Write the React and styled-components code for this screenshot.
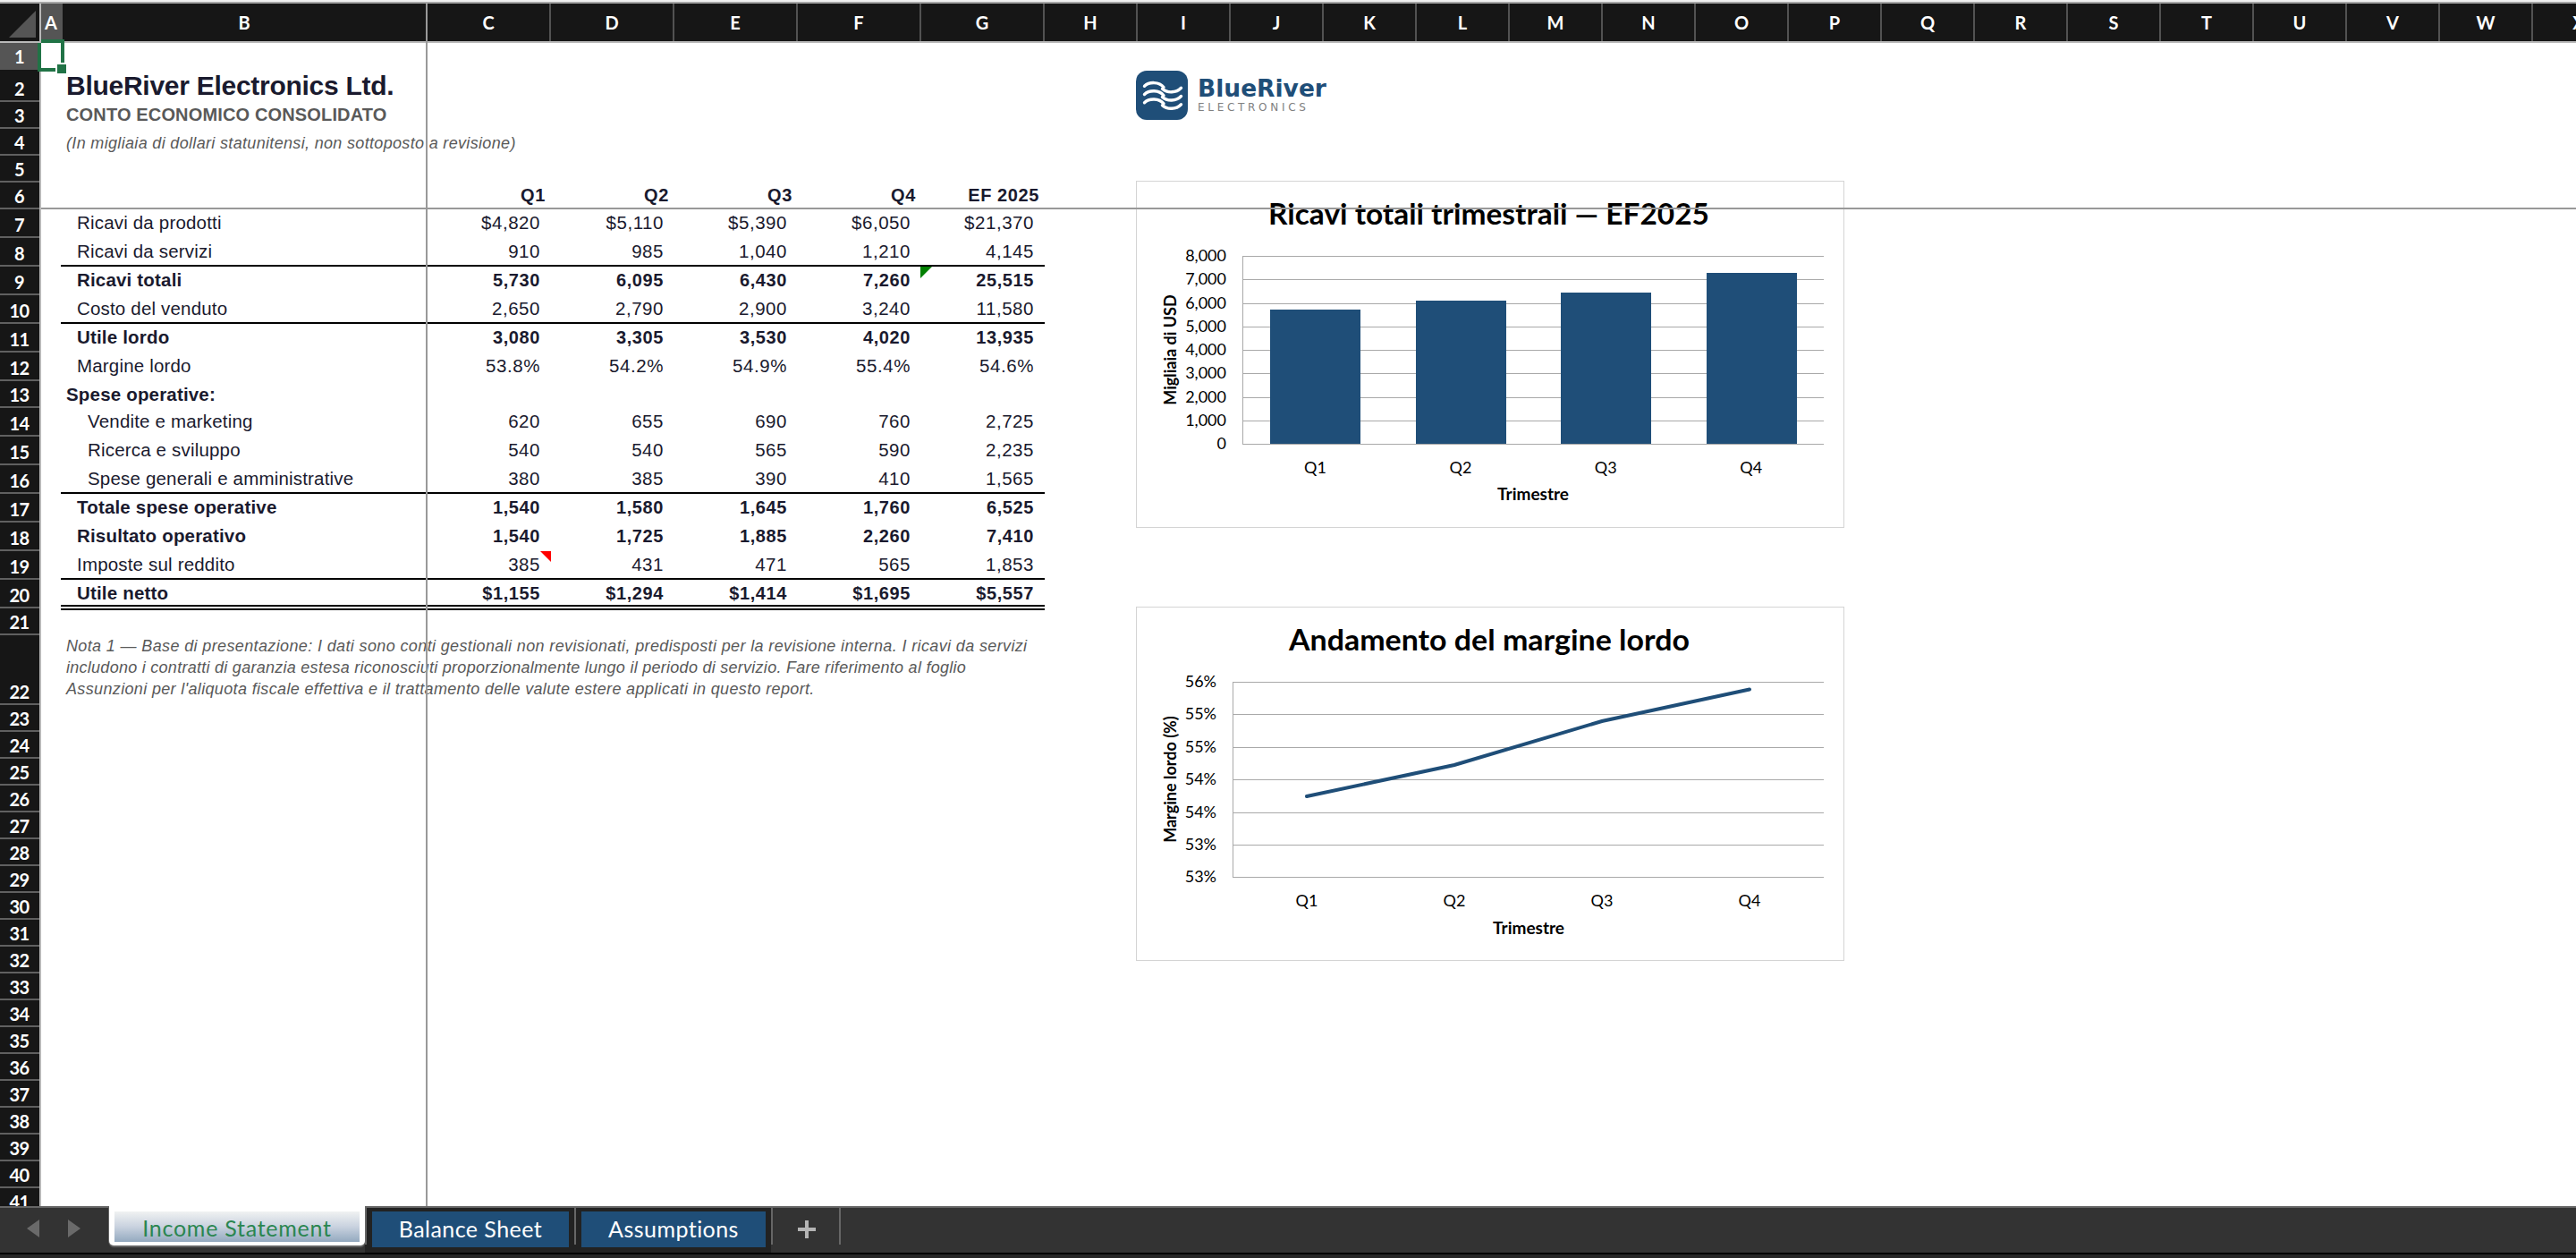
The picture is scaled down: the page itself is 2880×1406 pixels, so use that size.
import React from 'react';
import styled, { createGlobalStyle } from 'styled-components';

const GlobalStyle = createGlobalStyle`
  * { box-sizing: border-box; }
  body { margin: 0; background: #fff; overflow: hidden; }
`;

const SHEET_FONT = '"Liberation Sans", Arial, sans-serif';
const UI_FONT = 'Lato, sans-serif';
const NAVY = '#1f4e78';

const Window = styled.div`
  display: flex;
  flex-direction: column;
  width: 2880px;
  height: 1406px;
  overflow: hidden;
  background: #fff;
`;

const TopEdge = styled.div`
  height: 4px;
  flex: none;
  background: #f0f0f0;
  border-bottom: 2px solid #a6a6a6;
`;

const HeaderRow = styled.div`
  display: flex;
  flex: none;
  height: 44px;
  background: #161616;
  border-bottom: 2px solid #b9b9b9;
`;

const Corner = styled.div`
  display: flex;
  flex: none;
  width: 46px;
  padding: 8px 0 0 10px;
  border-right: 2px solid #b9b9b9;
`;

const ColumnHead = styled.div`
  flex: none;
  width: ${p => p.$width}px;
  border-right: 2px solid ${p => (p.$active ? '#555' : '#525252')};
  background: ${p => (p.$active ? '#555' : 'transparent')};
  color: #fff;
  font: 700 20px/42px ${UI_FONT};
  text-align: center;
`;

const Body = styled.div`
  display: flex;
  flex: none;
  height: 1300px;
  position: relative;
`;

const RowHeads = styled.div`
  flex: none;
  width: 46px;
  height: 1300px;
  overflow: hidden;
  background: #161616;
  border-right: 2px solid #b9b9b9;
`;

const RowHead = styled.div`
  display: flex;
  align-items: flex-end;
  justify-content: center;
  height: ${p => p.$height}px;
  padding-right: 1px;
  border-bottom: 2px solid ${p => (p.$active ? '#555' : '#606060')};
  background: ${p => (p.$active ? '#555' : 'transparent')};
  color: #fff;
  font: 700 20px/26px ${UI_FONT};
  letter-spacing: -0.5px;
`;

const Sheet = styled.div`
  flex: none;
  width: 1122px;
  padding-left: 22px;
  font-family: ${SHEET_FONT};
  color: #1a1a2e;
`;

const Row = styled.div`
  display: flex;
  align-items: flex-end;
  height: ${p => p.$height}px;
  border-bottom: ${p => (p.$line ? '2px solid #000' : '2px solid transparent')};
  font-size: 20.5px;
  font-weight: ${p => (p.$bold ? 700 : 400)};
  line-height: ${p => (p.$height > 30 ? 30 : 27)}px;
`;

const Label = styled.div`
  flex: none;
  width: 410px;
  padding-left: ${p => 6 + p.$indent * 12}px;
  letter-spacing: 0.18px;
  white-space: nowrap;
`;

const Value = styled.div`
  position: relative;
  flex: none;
  width: 138px;
  padding-right: ${p => (p.$head ? 6 : 12)}px;
  font-size: ${p => (p.$bold ? 20 : 20.5)}px;
  letter-spacing: ${p => (p.$bold ? 0.6 : 0.55)}px;
  text-align: right;
`;

const Flag = styled.svg`
  position: absolute;
  top: 0;
  ${p => (p.$side === 'left' ? 'left: -1px;' : 'right: 0;')}
`;

const Company = styled(Label)`
  font-size: 30px;
  font-weight: 700;
  letter-spacing: -0.27px;
  line-height: 32px;
`;

const Statement = styled(Label)`
  color: #595959;
  font-size: 20px;
  font-weight: 700;
  letter-spacing: 0.15px;
  line-height: 28px;
`;

const Remark = styled(Label)`
  color: #595959;
  font-size: 18px;
  font-style: italic;
  letter-spacing: 0.33px;
  line-height: 24px;
`;

const DoubleRule = styled.div`
  height: 6px;
  margin-top: -4px;
  border: solid #000;
  border-width: 2px 0;
`;

const Note = styled.div`
  margin-top: 28px;
  padding-left: 6px;
  color: #595959;
  font-size: 18px;
  font-style: italic;
  line-height: 24px;
  white-space: nowrap;
`;

const NoteLine = styled.div`
  letter-spacing: ${p => p.$tracking}px;
`;

const Objects = styled.div`
  flex: none;
  width: 794px;
  margin-left: 102px;
  padding-top: 31px;
`;

const Brand = styled.div`
  display: flex;
  height: 123px;
`;

const BrandText = styled.div`
  padding: 5px 0 0 11px;
  font-family: "DejaVu Sans", sans-serif;
`;

const BrandName = styled.div`
  color: ${NAVY};
  font-size: 26.5px;
  font-weight: 700;
  line-height: 29px;
`;

const BrandSub = styled.div`
  color: #808080;
  font-size: 12px;
  letter-spacing: 3.7px;
  line-height: 15px;
`;

const ChartBox = styled.div`
  width: 792px;
  height: ${p => p.$height}px;
  margin-bottom: 88px;
  background: #fff;
  border: 1px solid #d4d4d4;
`;

const FreezeLine = styled.div`
  position: absolute;
  background: #999;
  ${p => (p.$vertical
    ? 'left: 476px; top: -44px; width: 2px; height: 1344px;'
    : 'left: 46px; right: 0; top: 184px; height: 2px;')}
`;

const Cursor = styled.svg`
  position: absolute;
  left: 42px;
  top: -4px;
`;

const TabBar = styled.div`
  display: flex;
  flex: none;
  height: 54px;
  background: #333;
  border-bottom: 2px solid #000;
`;

const TabNav = styled.div`
  display: flex;
  align-items: center;
  gap: 32px;
  width: 122px;
  padding: 0 0 4px 30px;
  border-top: 2px solid #666;
`;

const ActiveTab = styled.div`
  width: 286px;
  height: 44px;
  padding: 6px 6px 4px;
  border-radius: 0 0 5px 5px;
  background: #fff;
  box-shadow: 0 2px 1px #666, -1px 0 #666;
`;

const ActiveFace = styled.div`
  height: 34px;
  background: linear-gradient(#f0f2f2, #c9d2df 50%, #93a9bf);
  color: #2b8650;
  font: 400 25px/37px ${UI_FONT};
  letter-spacing: 0.75px;
  text-align: center;
`;

const Tab = styled.div`
  display: flex;
  width: ${p => p.$width}px;
  padding: 4px 6px 6px 8px;
  border-top: 2px solid #666;
  background: linear-gradient(#666, #666) left top / 2px 41px no-repeat #222;
`;

const TabFace = styled.div`
  flex: 1;
  height: 40px;
  background: ${NAVY};
  color: #fff;
  font: 400 25px/38px ${UI_FONT};
  letter-spacing: 0.45px;
  text-align: center;
`;

const AddTab = styled.div`
  display: flex;
  width: 78px;
  justify-content: center;
  padding: 14px 0 0 2px;
  border-top: 2px solid #666;
  background:
    linear-gradient(#666, #666) left top / 2px 41px no-repeat,
    linear-gradient(#666, #666) right top / 2px 41px no-repeat;
`;

const TabRest = styled.div`
  flex: 1;
  border-top: 2px solid #666;
`;

const BottomEdge = styled.div`
  flex: none;
  height: 4px;
  background: #262626;
`;

const columns = 'ABCDEFGHIJKLMNOPQRSTUVWX'.split('').map((name, i) => {
  if (i === 0) return { name, width: 24 };
  if (i === 1) return { name, width: 408 };
  return { name, width: i < 7 ? 138 : 104 };
});

// rows past the note all use the default height of 30
const heights = [30, 36, 30, 30, 30, 30, 32, 32, 32, 32, 32, 32, 30, 32, 32, 32, 32, 32, 32, 32, 30, 78];
const rowHeights = Array.from({ length: 41 }, (_, i) => heights[i] || 30);

const lines = [
  { label: 'Ricavi da prodotti', indent: 1, values: ['$4,820', '$5,110', '$5,390', '$6,050', '$21,370'] },
  { label: 'Ricavi da servizi', indent: 1, line: true, values: ['910', '985', '1,040', '1,210', '4,145'] },
  { label: 'Ricavi totali', indent: 1, bold: true, values: ['5,730', '6,095', '6,430', '7,260', '25,515'], error: 4 },
  { label: 'Costo del venduto', indent: 1, line: true, values: ['2,650', '2,790', '2,900', '3,240', '11,580'] },
  { label: 'Utile lordo', indent: 1, bold: true, values: ['3,080', '3,305', '3,530', '4,020', '13,935'] },
  { label: 'Margine lordo', indent: 1, values: ['53.8%', '54.2%', '54.9%', '55.4%', '54.6%'] },
  { label: 'Spese operative:', indent: 0, bold: true, values: [] },
  { label: 'Vendite e marketing', indent: 2, values: ['620', '655', '690', '760', '2,725'] },
  { label: 'Ricerca e sviluppo', indent: 2, values: ['540', '540', '565', '590', '2,235'] },
  { label: 'Spese generali e amministrative', indent: 2, line: true, values: ['380', '385', '390', '410', '1,565'] },
  { label: 'Totale spese operative', indent: 1, bold: true, values: ['1,540', '1,580', '1,645', '1,760', '6,525'] },
  { label: 'Risultato operativo', indent: 1, bold: true, values: ['1,540', '1,725', '1,885', '2,260', '7,410'] },
  { label: 'Imposte sul reddito', indent: 1, line: true, values: ['385', '431', '471', '565', '1,853'], comment: 0 },
  { label: 'Utile netto', indent: 1, bold: true, values: ['$1,155', '$1,294', '$1,414', '$1,695', '$5,557'] },
];

const quarters = ['Q1', 'Q2', 'Q3', 'Q4'];

const Logo = () => (
  <svg width="58" height="55" viewBox="0 0 58 55">
    <rect width="58" height="55" rx="12" fill={NAVY} />
    <g fill="none" stroke="#fff" strokeWidth="3.4" strokeLinecap="round">
      {[0, 9.2, 18.4].map(y => (
        <path
          key={y}
          d={`M9.5 ${17.3 + y}C15 ${12 + y} 26 ${12.3 + y} 31 ${18.5 + y}M29.5 ${20.3 + y}C35 ${25.3 + y} 45 ${25 + y} 50.5 ${19.3 + y}`}
        />
      ))}
    </g>
  </svg>
);

const ChartText = styled.text`
  font-family: ${UI_FONT};
  font-size: ${p => p.$size || 18}px;
  font-weight: ${p => (p.$bold ? 700 : 400)};
  fill: #000;
`;

const BarChart = () => {
  const totals = [5730, 6095, 6430, 7260];
  const base = 293;
  const unit = 210 / 8000;
  return (
    <svg width="790" height="386">
      <ChartText x="393.5" y="48" $size="33" $bold textAnchor="middle" textLength="493" lengthAdjust="spacingAndGlyphs">Ricavi totali trimestrali — EF2025</ChartText>
      {[0, 1, 2, 3, 4, 5, 6, 7, 8].map(n => (
        <g key={n}>
          <rect x="118" y={Math.round(base - n * 1000 * unit)} width="650" height="1" fill="#a9a9a9" />
          <ChartText x="100" y={Math.round(base - n * 1000 * unit) + 6} textAnchor="end">{n ? `${n},000` : '0'}</ChartText>
        </g>
      ))}
      <rect x="118" y="83" width="1" height="211" fill="#a9a9a9" />
      {totals.map((t, i) => (
        <g key={t}>
          <rect x={Math.round(149 + i * 162.5)} y={Math.round(base - t * unit)} width="101" height={Math.round(t * unit)} fill={NAVY} />
          <ChartText x={199.5 + i * 162.4} y="326" textAnchor="middle">{quarters[i]}</ChartText>
        </g>
      ))}
      <ChartText x="443" y="356" $size="19" $bold textAnchor="middle">Trimestre</ChartText>
      <ChartText transform="translate(44 188) rotate(-90)" $bold textAnchor="middle">Migliaia di USD</ChartText>
    </svg>
  );
};

const LineChart = () => (
  <svg width="790" height="394">
    <ChartText x="394" y="48" $size="33" $bold textAnchor="middle" textLength="448" lengthAdjust="spacingAndGlyphs">Andamento del margine lordo</ChartText>
    {['56%', '55%', '55%', '54%', '54%', '53%', '53%'].map((label, i) => (
      <g key={i}>
        <rect x="107" y={Math.round(83 + i * 36.4)} width="661" height="1" fill="#a9a9a9" />
        <ChartText x="89" y={Math.round(83 + i * 36.4) + 6} textAnchor="end">{label}</ChartText>
      </g>
    ))}
    <rect x="107" y="83" width="1" height="219" fill="#a9a9a9" />
    <path d="M190 211L355 176L520 127L685 91.5" fill="none" stroke={NAVY} strokeWidth="4" strokeLinecap="round" />
    {quarters.map((q, i) => (
      <ChartText key={q} x={190 + i * 165} y="334" textAnchor="middle">{q}</ChartText>
    ))}
    <ChartText x="438" y="365" $size="19" $bold textAnchor="middle">Trimestre</ChartText>
    <ChartText transform="translate(44 192) rotate(-90)" $bold textAnchor="middle">Margine lordo (%)</ChartText>
  </svg>
);

const LineRow = ({ item, height }) => (
  <Row $height={height} $line={item.line} $bold={item.bold}>
    <Label $indent={item.indent}>{item.label}</Label>
    {item.values.map((value, i) => (
      <Value key={i} $bold={item.bold}>
        {value}
        {item.error === i && (
          <Flag width="13" height="13" $side="left"><path d="M0 0H13L0 13Z" fill="#008000" /></Flag>
        )}
        {item.comment === i && (
          <Flag width="12" height="12" $side="right"><path d="M0 0H12V12Z" fill="#f00" /></Flag>
        )}
      </Value>
    ))}
  </Row>
);

const App = () => (
  <Window>
    <GlobalStyle />
    <TopEdge />
    <HeaderRow>
      <Corner>
        <svg width="30" height="30"><path d="M30 0V30H0Z" fill="#555" /></svg>
      </Corner>
      {columns.map((c, i) => (
        <ColumnHead key={c.name} $width={c.width} $active={i === 0}>{c.name}</ColumnHead>
      ))}
    </HeaderRow>

    <Body>
      <RowHeads>
        {rowHeights.map((h, i) => (
          <RowHead key={i} $height={h} $active={i === 0}>{i + 1}</RowHead>
        ))}
      </RowHeads>
      <Sheet>
        <Row $height={30} />
        <Row $height={36}><Company $indent={0}>BlueRiver Electronics Ltd.</Company></Row>
        <Row $height={30}><Statement $indent={0}>CONTO ECONOMICO CONSOLIDATO</Statement></Row>
        <Row $height={30}><Remark $indent={0}>(In migliaia di dollari statunitensi, non sottoposto a revisione)</Remark></Row>
        <Row $height={30} />
        <Row $height={30} $bold>
          <Label $indent={0} />
          {[...quarters, 'EF 2025'].map(q => <Value key={q} $head $bold>{q}</Value>)}
        </Row>
        {lines.map((item, i) => <LineRow key={item.label} item={item} height={rowHeights[i + 6]} />)}
        <DoubleRule />
        <Note>
          <NoteLine $tracking={0.37}>Nota 1 — Base di presentazione: I dati sono conti gestionali non revisionati, predisposti per la revisione interna. I ricavi da servizi</NoteLine>
          <NoteLine $tracking={0.27}>includono i contratti di garanzia estesa riconosciuti proporzionalmente lungo il periodo di servizio. Fare riferimento al foglio</NoteLine>
          <NoteLine $tracking={0.35}>Assunzioni per l'aliquota fiscale effettiva e il trattamento delle valute estere applicati in questo report.</NoteLine>
        </Note>
      </Sheet>
      <Objects>
        <Brand>
          <Logo />
          <BrandText>
            <BrandName>BlueRiver</BrandName>
            <BrandSub>ELECTRONICS</BrandSub>
          </BrandText>
        </Brand>
        <ChartBox $height={388}><BarChart /></ChartBox>
        <ChartBox $height={396}><LineChart /></ChartBox>
      </Objects>
      <FreezeLine />
      <FreezeLine $vertical />
      <Cursor width="34" height="40">
        <path d="M4 2H28V26M2 4V34H20" fill="none" stroke="#217346" strokeWidth="4" />
        <rect x="26" y="0" width="4" height="4" fill="#217346" />
        <rect x="22" y="28" width="10" height="10" fill="#217346" />
      </Cursor>
    </Body>

    <TabBar>
      <TabNav>
        <svg width="14" height="20"><path d="M14 0V20L0 10Z" fill="#6a6a6a" /></svg>
        <svg width="14" height="20"><path d="M0 0V20L14 10Z" fill="#6a6a6a" /></svg>
      </TabNav>
      <ActiveTab><ActiveFace>Income Statement</ActiveFace></ActiveTab>
      <Tab $width={234}><TabFace>Balance Sheet</TabFace></Tab>
      <Tab $width={220}><TabFace>Assumptions</TabFace></Tab>
      <AddTab>
        <svg width="20" height="20"><path d="M10 0V20M0 10H20" stroke="#b4b4b4" strokeWidth="4" /></svg>
      </AddTab>
      <TabRest />
    </TabBar>
    <BottomEdge />
  </Window>
);

export default App;
